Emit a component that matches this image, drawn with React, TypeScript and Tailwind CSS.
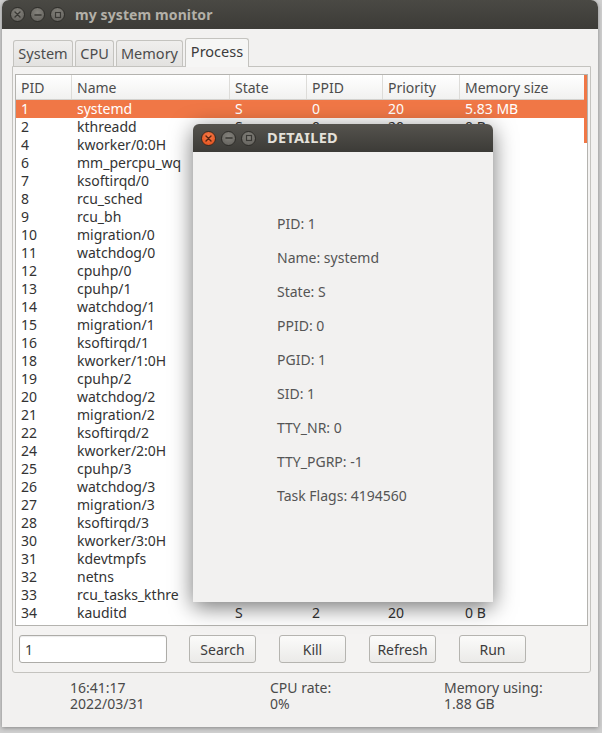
import React from "react";

type Row = [string, string, string, string, string, string];

const rows: Row[] = [
  ["1", "systemd", "S", "0", "20", "5.83 MB"],
  ["2", "kthreadd", "S", "0", "20", "0 B"],
  ["4", "kworker/0:0H", "I", "2", "0", "0 B"],
  ["6", "mm_percpu_wq", "I", "2", "0", "0 B"],
  ["7", "ksoftirqd/0", "S", "2", "20", "0 B"],
  ["8", "rcu_sched", "I", "2", "20", "0 B"],
  ["9", "rcu_bh", "I", "2", "20", "0 B"],
  ["10", "migration/0", "S", "2", "-100", "0 B"],
  ["11", "watchdog/0", "S", "2", "-100", "0 B"],
  ["12", "cpuhp/0", "S", "2", "20", "0 B"],
  ["13", "cpuhp/1", "S", "2", "20", "0 B"],
  ["14", "watchdog/1", "S", "2", "-100", "0 B"],
  ["15", "migration/1", "S", "2", "-100", "0 B"],
  ["16", "ksoftirqd/1", "S", "2", "20", "0 B"],
  ["18", "kworker/1:0H", "I", "2", "0", "0 B"],
  ["19", "cpuhp/2", "S", "2", "20", "0 B"],
  ["20", "watchdog/2", "S", "2", "-100", "0 B"],
  ["21", "migration/2", "S", "2", "-100", "0 B"],
  ["22", "ksoftirqd/2", "S", "2", "20", "0 B"],
  ["24", "kworker/2:0H", "I", "2", "0", "0 B"],
  ["25", "cpuhp/3", "S", "2", "20", "0 B"],
  ["26", "watchdog/3", "S", "2", "-100", "0 B"],
  ["27", "migration/3", "S", "2", "-100", "0 B"],
  ["28", "ksoftirqd/3", "S", "2", "20", "0 B"],
  ["30", "kworker/3:0H", "I", "2", "0", "0 B"],
  ["31", "kdevtmpfs", "S", "2", "20", "0 B"],
  ["32", "netns", "I", "2", "0", "0 B"],
  ["33", "rcu_tasks_kthre", "S", "2", "20", "0 B"],
  ["34", "kauditd", "S", "2", "20", "0 B"],
];

const details = [
  "PID: 1",
  "Name: systemd",
  "State: S",
  "PPID: 0",
  "PGID: 1",
  "SID: 1",
  "TTY_NR: 0",
  "TTY_PGRP: -1",
  "Task Flags: 4194560",
];

function WinButtons({ active }: { active: boolean }) {
  return (
    <div className="flex items-center gap-[5px]">
      <div
        className={
          active
            ? "w-[15px] h-[15px] rounded-full bg-[radial-gradient(circle_at_50%_35%,#f77c4a,#df4a16)] border border-[#3a2a20] flex items-center justify-center"
            : "w-[15px] h-[15px] rounded-full bg-[radial-gradient(circle_at_50%_35%,#85837d,#5f5d58)] border border-[#2e2d29] flex items-center justify-center"
        }
      >
        <svg width="7" height="7" viewBox="0 0 7 7">
          <path d="M1 1L6 6M6 1L1 6" stroke={active ? "#5a2410" : "#3a3935"} strokeWidth="1.4" strokeLinecap="round" />
        </svg>
      </div>
      <div className="w-[15px] h-[15px] rounded-full bg-[radial-gradient(circle_at_50%_35%,#85837d,#5f5d58)] border border-[#2e2d29] flex items-center justify-center">
        <svg width="8" height="8" viewBox="0 0 8 8">
          <path d="M1 4H7" stroke="#3a3935" strokeWidth="1.6" strokeLinecap="round" />
        </svg>
      </div>
      <div className="w-[15px] h-[15px] rounded-full bg-[radial-gradient(circle_at_50%_35%,#85837d,#5f5d58)] border border-[#2e2d29] flex items-center justify-center">
        <svg width="8" height="8" viewBox="0 0 8 8">
          <rect x="1.5" y="1.5" width="5" height="5" fill="none" stroke="#3a3935" strokeWidth="1.2" />
        </svg>
      </div>
    </div>
  );
}

const colW = ["w-[56px]", "w-[158px]", "w-[77px]", "w-[76px]", "w-[77px]", "flex-1"];

export default function App() {
  return (
    <div className="relative w-[602px] h-[733px] bg-[#cfcfcf] overflow-hidden font-['Noto_Sans',sans-serif] text-[14px]">
      {/* main window */}
      <div className="ml-[2px] w-[596px] h-[727px] flex flex-col bg-[#f2f1f0] rounded-t-[7px] shadow-[0_1px_4px_rgba(0,0,0,0.35)]">
        <div className="h-[29px] rounded-t-[7px] bg-[linear-gradient(#4a4944,#3c3b37)] flex items-center pl-[8px]">
          <WinButtons active={false} />
          <span className="ml-[10px] font-bold text-[14px] text-[#b3b0a8] tracking-[0.1px]">my system monitor</span>
        </div>

        <div className="pl-[10px] pr-[6px] pt-[9px]">
          {/* tabs */}
          <div className="flex items-end h-[28px] pl-[1px] gap-[2px] text-[#4c4c4c] text-[14.5px]">
            <div className="w-[60px] h-[26px] flex items-center justify-center bg-[linear-gradient(#efeeed,#e3e2e0)] border border-b-0 border-[#c4c3bf] rounded-t-[3px]">System</div>
            <div className="w-[39px] h-[26px] flex items-center justify-center bg-[linear-gradient(#efeeed,#e3e2e0)] border border-b-0 border-[#c4c3bf] rounded-t-[3px]">CPU</div>
            <div className="w-[67px] h-[26px] flex items-center justify-center bg-[linear-gradient(#efeeed,#e3e2e0)] border border-b-0 border-[#c4c3bf] rounded-t-[3px]">Memory</div>
            <div className="relative -mb-[1px] w-[64px] h-[29px] pb-[2px] flex items-center justify-center bg-[#f6f6f5] border border-b-0 border-[#c4c3bf] rounded-t-[3px] z-10 text-[#3c3c3c]">Process</div>
          </div>

          {/* panel */}
          <div className="w-[579px] h-[607px] border border-[#c4c3bf] rounded-b-[3px] bg-[#f4f3f2] px-[2px] pt-[7px] flex flex-col">
            <div className="relative h-[552px] border border-[#b4b3af] bg-white flex flex-col overflow-hidden">
              {/* header */}
              <div className="h-[25px] flex bg-[linear-gradient(#ffffff,#f1f1f0)] border-b border-[#d2d1ce] text-[#4c4c4c]">
                {["PID", "Name", "State", "PPID", "Priority", "Memory size"].map((h, i) => (
                  <div
                    key={h}
                    className={`${colW[i]} pl-[5px] flex items-center ${i < 5 ? "border-r border-[#dddcd9]" : ""}`}
                  >
                    {h}
                  </div>
                ))}
              </div>
              {/* rows */}
              <div className="flex flex-col">
                {rows.map((r, ri) => (
                  <div
                    key={r[0]}
                    className={`h-[18px] flex items-center leading-[18px] ${ri === 0 ? "bg-[#f07746] text-white" : "text-[#333333]"}`}
                  >
                    {r.map((c, ci) => (
                      <div key={ci} className={`${colW[ci]} pl-[5px] whitespace-nowrap overflow-hidden`}>
                        {c}
                      </div>
                    ))}
                  </div>
                ))}
              </div>
              {/* overlay scrollbar indicator */}
              <div className="absolute right-0 top-0 w-[3px] h-[68px] bg-[#f07746]" />
            </div>

            {/* controls */}
            <div className="flex items-center mt-[9px] pl-[4px] text-[#3c3c3c]">
              <div className="w-[148px] h-[28px] border border-[#adaca8] rounded-[3px] bg-white flex items-center pl-[5px] shadow-[inset_0_1px_1px_rgba(0,0,0,0.08)]">1</div>
              {["Search", "Kill", "Refresh", "Run"].map((b, i) => (
                <div
                  key={b}
                  className={`${i === 0 ? "ml-[22px]" : "ml-[23px]"} w-[67px] h-[28px] border border-[#b5b4b0] rounded-[3px] bg-[linear-gradient(#fbfbfa,#ebeae8)] flex items-center justify-center`}
                >
                  {b}
                </div>
              ))}
            </div>
          </div>

          {/* status */}
          <div className="flex pt-[7px] text-[#4a4a4a] leading-[16px]">
            <div className="ml-[58px] w-[200px]">
              <div>16:41:17</div>
              <div>2022/03/31</div>
            </div>
            <div className="w-[174px]">
              <div>CPU rate:</div>
              <div>0%</div>
            </div>
            <div>
              <div>Memory using:</div>
              <div>1.88 GB</div>
            </div>
          </div>
        </div>
      </div>

      {/* dialog */}
      <div className="absolute left-[193px] top-[124px] w-[300px] h-[478px] flex flex-col bg-[#f2f1f0] rounded-t-[6px] shadow-[0_5px_22px_rgba(0,0,0,0.55)]">
        <div className="h-[28px] rounded-t-[6px] bg-[linear-gradient(#55534e,#3c3b37)] flex items-center pl-[8px]">
          <WinButtons active={true} />
          <span className="ml-[11px] font-bold text-[14.5px] text-[#e4e1da] tracking-[0.3px]">DETAILED</span>
        </div>
        <div className="pl-[84px] pt-[62px] flex flex-col gap-[14px] text-[#555555] text-[14px] leading-[20px]">
          {details.map((d) => (
            <div key={d}>{d}</div>
          ))}
        </div>
      </div>
    </div>
  );
}
